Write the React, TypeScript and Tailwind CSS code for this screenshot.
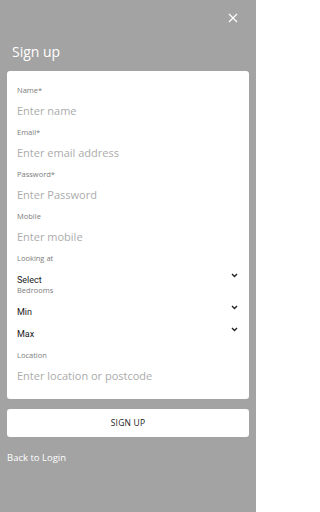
import React from "react";

const font = { fontFamily: '"Open Sans", "Liberation Sans", sans-serif' };

type Field = { label: string; placeholder: string };

const topFields: Field[] = [
  { label: "Name*", placeholder: "Enter name" },
  { label: "Email*", placeholder: "Enter email address" },
  { label: "Password*", placeholder: "Enter Password" },
  { label: "Mobile", placeholder: "Enter mobile" },
];

const Chevron = () => (
  <svg width="7" height="5" viewBox="0 0 7 5" className="mb-[7px] mr-[1px]">
    <path d="M1 1 L3.5 3.5 L6 1" fill="none" stroke="#222" strokeWidth="1.4" />
  </svg>
);

const Label = ({ children }: { children: React.ReactNode }) => (
  <div className="h-[10px] text-[7.5px] leading-[10px] text-[#7c7c7c]">{children}</div>
);

const Input = ({ placeholder }: { placeholder: string }) => (
  <div className="h-[32px] flex items-center text-[11px] text-[#ababab]">{placeholder}</div>
);

const SelectRow = ({ value }: { value: string }) => (
  <div className="h-[22px] flex items-end justify-between">
    <span
      className="text-[9px] leading-[10px] text-[#1a1a1a]"
      style={{ fontFamily: '"Roboto", "Liberation Sans", sans-serif' }}
    >
      {value}
    </span>
    <Chevron />
  </div>
);

export default function App() {
  return (
    <div className="w-[256px] h-[512px] bg-[#a3a3a3] px-[7px] flex flex-col" style={font}>
      <div className="flex justify-end pt-[13px] pr-[11px]">
        <svg width="10" height="10" viewBox="0 0 10 10">
          <path d="M1 1 L9 9 M9 1 L1 9" stroke="#fff" strokeWidth="1.2" />
        </svg>
      </div>
      <h1 className="mt-[20px] ml-[5px] text-[14px] leading-[18px] text-white">Sign up</h1>
      <div className="mt-[10px] bg-white rounded-[3px] px-[10px] pt-[14px] pb-[7px]">
        {topFields.map((f) => (
          <div key={f.label}>
            <Label>{f.label}</Label>
            <Input placeholder={f.placeholder} />
          </div>
        ))}
        <Label>Looking at</Label>
        <SelectRow value="Select" />
        <Label>Bedrooms</Label>
        <SelectRow value="Min" />
        <SelectRow value="Max" />
        <div className="mt-[11px]">
          <Label>Location</Label>
          <Input placeholder="Enter location or postcode" />
        </div>
      </div>
      <button className="mt-[10px] h-[28px] bg-white rounded-[3px] text-[8.5px] text-[#222] tracking-wide">
        SIGN UP
      </button>
      <div className="mt-[14px] text-[9.5px] text-white">Back to Login</div>
    </div>
  );
}
